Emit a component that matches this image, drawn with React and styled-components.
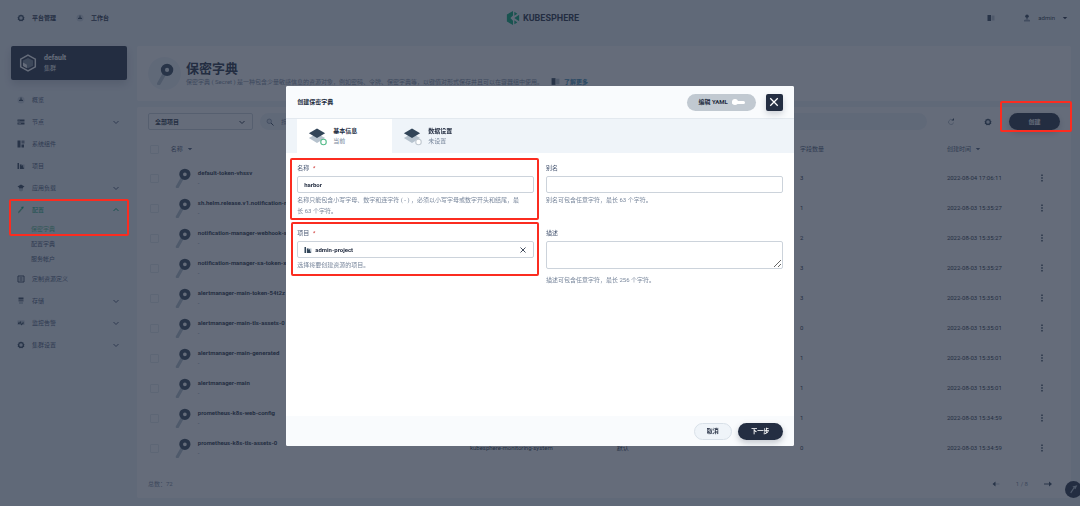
import React, { useState } from 'react';
import styled, { createGlobalStyle, css } from 'styled-components';

const GlobalStyle = createGlobalStyle`
    * {
        box-sizing: border-box;
    }
    body {
        margin: 0;
        overflow: hidden;
        background-color: #eff4f9;
        color: #242e42;
        font-family: Roboto, "Noto Sans CJK SC", sans-serif;
        font-size: 6px;
        line-height: 10px;
    }
    h1, h2, p, ul {
        margin: 0;
        padding: 0;
    }
    ul {
        list-style: none;
    }
    button, input, select, textarea {
        margin: 0;
        padding: 0;
        border: 0;
        background: none;
        color: inherit;
        font: inherit;
        outline: none;
    }
    button {
        cursor: pointer;
    }
    a {
        color: inherit;
        text-decoration: none;
    }
`;

// Icons

const Svg = ({ size = 8, children, ...rest }) => (
    <svg width={size} height={size} viewBox="0 0 16 16" fill="none" aria-hidden="true" {...rest}>{children}</svg>
);

const Gear = () => (
    <Svg>
        <path d="M8 1l2 1.6 2.6-.1.4 2.5L15 7l-1 2 .6 2.5-2.4 1L11 14.6 8 14l-3 .6-1.2-2.1-2.4-1L2 9 1 7l2-2 .4-2.5 2.6.1z" fill="#324558" />
        <circle cx="8" cy="8" r="3.500" fill="#d5dde6" />
    </Svg>
);
const Dashboard = () => (
    <Svg>
        <circle cx="8" cy="8" r="7" fill="#cdd6df" />
        <path d="M7 3h2v4l3 1v2H4V8l3-1z" fill="#324558" />
    </Svg>
);
const Nodes = () => (
    <Svg>
        <path d="M1 3h14v4H1zM1 9h14v4H1z" fill="#324558" />
        <path d="M3 4.5h2v1H3zM3 10.5h5v1H3z" fill="#fff" />
    </Svg>
);
const Components = () => (
    <Svg>
        <path d="M1 1h6v14H1zM9 9h5v6H9z" fill="#324558" />
        <path d="M9 1h6v6H9z" fill="#73808f" />
    </Svg>
);
const Project = () => (
    <Svg>
        <path d="M1 2h3v12H1z" fill="#324558" />
        <path d="M5 5h10v9H5z" fill="#b6c2cd" />
        <path d="M6 5h3v3l3-2v3l2 5H6z" fill="#324558" />
    </Svg>
);
const Workload = () => (
    <Svg>
        <path d="M8 1l7 4-3 2v2H4V7L1 5z" fill="#324558" />
        <path d="M4 10h8v3l-4 2-4-2z" fill="#b6c2cd" />
    </Svg>
);
const Hammer = () => (
    <Svg>
        <path d="M2 15l1-4 6-7 2 2-6 7z" fill="#55bc8a" />
        <path d="M8 2l5-1v3l-2 2z" fill="#00aa72" />
    </Svg>
);
const Resource = () => (
    <Svg>
        <path d="M2 2h12v12H2z" stroke="#324558" strokeWidth="2" />
        <path d="M5 5h6v2H5zM5 9h6v2H5z" fill="#324558" />
    </Svg>
);
const Storage = () => (
    <Svg>
        <path d="M3 1h10v4H3z" fill="#324558" />
        <path d="M3 6h10v3H3z" fill="#73808f" />
        <path d="M4 10h8v4H4z" fill="#b6c2cd" />
    </Svg>
);
const Monitor = () => (
    <Svg>
        <path d="M1 3h14v9H1z" fill="#b6c2cd" />
        <path d="M2 7h3l2-3 2 6 2-3h3v2h-2l-3 4-3-5-1 2H2z" fill="#324558" />
    </Svg>
);
const Book = ({ size }) => (
    <Svg size={size}>
        <path d="M1 2h7v12H1z" fill="#324558" />
        <path d="M9 3h6v10H9z" fill="#b6c2cd" />
    </Svg>
);
const User = () => (
    <Svg>
        <circle cx="8" cy="4.500" r="3.500" fill="#324558" />
        <path d="M7 8h2v3H7z" fill="#324558" />
        <path d="M2 15v-3l4-1h4l4 1v3z" fill="#8a98a7" />
    </Svg>
);
const Chevron = ({ up }) => (
    <Svg>
        <path d={up ? 'M3 10l5-5 5 5' : 'M3 6l5 5 5-5'} stroke="currentColor" strokeWidth="2" />
    </Svg>
);
const Caret = () => (
    <Svg size={6}>
        <path d="M2 5h12l-6 6z" fill="currentColor" />
    </Svg>
);
const Close = ({ size }) => (
    <Svg size={size}>
        <path d="M3 3l10 10M13 3L3 13" stroke="currentColor" strokeWidth="1.700" />
    </Svg>
);
const Arrow = ({ back }) => (
    <Svg>
        {back ? (
            <>
                <path d="M6 7h9v2H6z" fill="#b6c2cd" />
                <path d="M1 8l6-5v10z" fill="#324558" />
            </>
        ) : (
            <>
                <path d="M0 7h11v2H0z" fill="#324558" />
                <path d="M16 8l-6-5v10z" fill="#324558" />
            </>
        )}
    </Svg>
);
const Refresh = () => (
    <Svg>
        <path d="M11 4A5 5 0 1 0 13 9" stroke="#98a5b3" strokeWidth="1.500" />
        <path d="M9 5h5V0z" fill="#324558" />
    </Svg>
);
const Magnifier = () => (
    <Svg>
        <circle cx="6.500" cy="6.500" r="4.500" fill="#d5dde6" stroke="#79879c" strokeWidth="1.500" />
        <path d="M10 10l5 5" stroke="#324558" strokeWidth="2" />
    </Svg>
);
const More = () => (
    <Svg>
        <path d="M6.500 1h3v3h-3zM6.500 6.500h3v3h-3zM6.500 12h3v3h-3z" fill="#324558" />
    </Svg>
);
const KeyIcon = ({ size }) => (
    <Svg size={size}>
        <path d="M7.500 8L3.500 15" stroke="#b6c2cd" strokeWidth="2.600" strokeLinecap="round" />
        <circle cx="9.500" cy="5" r="3" stroke="#324558" strokeWidth="3" />
    </Svg>
);
const Cube = () => (
    <Svg size={18}>
        <path d="M8 1l6.500 3.500v7L8 15l-6.500-3.500v-7z" stroke="#fff" strokeWidth="1.300" />
        <path d="M8 3.500l4.500 2.300v4.600L8 12.700 3.500 10.400V5.800z" fill="#b6c2cd" fillOpacity=".6" />
        <path d="M3.500 7.500L7 9.500v3.200l-3.500-2z" fill="#fff" />
    </Svg>
);
const Layers = ({ color }) => (
    <Svg size={20}>
        <path d="M8 6l6.500 3.500L8 13.500 1.500 9.500z" fill="#b6c2cd" />
        <path d="M8 2l6.500 3.700L8 9.500 1.500 5.700z" fill="#324558" />
        <circle cx="13.200" cy="12.800" r="2.200" fill="#fff" stroke={color} strokeWidth=".9" />
    </Svg>
);
const Logo = () => (
    <Svg size={14}>
        <path d="M8 0v5L5 8l3 3v5L1 12V4z" fill="#00aa72" />
        <path d="M9.500 .8L13 3 9.500 5.500zM15 4.300v7.400L9.500 8zM9.500 10.500L13 13l-3.500 2.200z" fill="#00aa72" />
    </Svg>
);

// Data

const navs = [
    { name: '概览', icon: Dashboard },
    { name: '节点', icon: Nodes, more: true },
    { name: '系统组件', icon: Components },
    { name: '项目', icon: Project },
    { name: '应用负载', icon: Workload, more: true },
    { name: '配置', icon: Hammer, more: true, open: true, items: ['保密字典', '配置字典', '服务帐户'] },
    { name: '定制资源定义', icon: Resource },
    { name: '存储', icon: Storage, more: true },
    { name: '监控告警', icon: Monitor, more: true },
    { name: '集群设置', icon: Gear, more: true },
];

const ns = 'kubesphere-monitoring-system';
const secrets = [
    ['default-token-vhssv', 3, '2022-08-04 17:06:11'],
    ['sh.helm.release.v1.notification-manager.v1', 1, '2022-08-03 15:35:27'],
    ['notification-manager-webhook-server-cert', 2, '2022-08-03 15:35:27'],
    ['notification-manager-sa-token-x7k2p', 3, '2022-08-03 15:35:27'],
    ['alertmanager-main-token-54t2z', 3, '2022-08-03 15:35:01'],
    ['alertmanager-main-tls-assets-0', 0, '2022-08-03 15:35:01'],
    ['alertmanager-main-generated', 1, '2022-08-03 15:35:01'],
    ['alertmanager-main', 1, '2022-08-03 15:35:01'],
    ['prometheus-k8s-web-config', 1, '2022-08-03 15:34:59'],
    ['prometheus-k8s-tls-assets-0', 0, '2022-08-03 15:34:59'],
];

const Sidebar = () => (
    <Side>
        <Cluster>
            <Cube />
            <div>
                <ClusterName>default</ClusterName>
                <div>集群</div>
            </div>
        </Cluster>
        <ul>
            {navs.map(({ name, icon: NavIcon, more, open, items }) => (
                <NavItem key={name}>
                    <NavLink href="#" $active={open}>
                        <NavIcon />
                        <span>{name}</span>
                        {more && <Chevron up={open} />}
                    </NavLink>
                    {items && (
                        <SubNav>
                            {items.map((item, i) => (
                                <li key={item}><SubLink href="#" $active={i === 0}>{item}</SubLink></li>
                            ))}
                        </SubNav>
                    )}
                    {open && <Highlight $inset="0 -2px 32px" />}
                </NavItem>
            ))}
        </ul>
    </Side>
);

const SecretTable = () => (
    <Table>
        <colgroup>
            <col style={{ width: '2.5%' }} />
            <col style={{ width: '32.8%' }} />
            <col style={{ width: '16.1%' }} />
            <col style={{ width: '20.1%' }} />
            <col style={{ width: '16.1%' }} />
            <col style={{ width: '9.3%' }} />
            <col />
        </colgroup>
        <thead>
            <tr>
                <th><Check aria-label="全选" /></th>
                <th><Sort>名称 <Caret /></Sort></th>
                <th>项目</th>
                <th>类型</th>
                <th>字段数量</th>
                <th><Sort>创建时间 <Caret /></Sort></th>
                <th />
            </tr>
        </thead>
        <tbody>
            {secrets.map(([name, count, time]) => (
                <tr key={name}>
                    <td><Check aria-label={name} /></td>
                    <td>
                        <NameCell>
                            <KeyIcon size={20} />
                            <div>
                                <Name href="#">{name}</Name>
                                <Sub>-</Sub>
                            </div>
                        </NameCell>
                    </td>
                    <td>{ns}</td>
                    <td>默认</td>
                    <td>{count}</td>
                    <td>{time}</td>
                    <td><button type="button" aria-label="更多操作"><More /></button></td>
                </tr>
            ))}
        </tbody>
    </Table>
);

const CreateModal = () => {
    const [form, setForm] = useState({ name: 'harbor', alias: '', desc: '' });
    const update = (e) => setForm({ ...form, [e.target.name]: e.target.value });

    return (
        <Mask>
            <Modal role="dialog" aria-labelledby="modal-title">
                <ModalHeader>
                    <ModalTitle id="modal-title">创建保密字典</ModalTitle>
                    <YamlButton type="button">编辑 YAML <Toggle /></YamlButton>
                    <CloseButton type="button" aria-label="关闭"><Close size={12} /></CloseButton>
                </ModalHeader>
                <Steps>
                    <Step type="button" $current>
                        <Layers color="#55bc8a" />
                        <span><b>基本信息</b><br />当前</span>
                    </Step>
                    <Step type="button">
                        <Layers color="#c1c9d1" />
                        <span><b>数据设置</b><br />未设置</span>
                    </Step>
                </Steps>
                <ModalBody>
                    <Field>
                        <Label htmlFor="name">名称 <i>*</i></Label>
                        <Input id="name" name="name" value={form.name} onChange={update} />
                        <Help>名称只能包含小写字母、数字和连字符 ( - ) ，必须以小写字母或数字开头和结尾，最长 63 个字符。</Help>
                        <Highlight $inset="-5px -5px -4px -7px" />
                    </Field>
                    <Field>
                        <Label htmlFor="alias">别名</Label>
                        <Input id="alias" name="alias" value={form.alias} onChange={update} />
                        <Help>别名可包含任意字符，最长 63 个字符。</Help>
                    </Field>
                    <Field>
                        <Label htmlFor="project">项目 <i>*</i></Label>
                        <ProjectBox>
                            <Project />
                            <select id="project"><option>admin-project</option></select>
                            <button type="button" aria-label="清除"><Close size={8} /></button>
                        </ProjectBox>
                        <Help>选择将要创建资源的项目。</Help>
                        <Highlight $inset="-6px -5px -6px -6px" />
                    </Field>
                    <Field>
                        <Label htmlFor="desc">描述</Label>
                        <TextArea id="desc" name="desc" value={form.desc} onChange={update} />
                        <Help>描述可包含任意字符，最长 256 个字符。</Help>
                    </Field>
                </ModalBody>
                <ModalFooter>
                    <CancelButton type="button">取消</CancelButton>
                    <NextButton type="button">下一步</NextButton>
                </ModalFooter>
            </Modal>
        </Mask>
    );
};

const App = () => (
    <>
        <GlobalStyle />
        <Header>
            <HeaderLinks>
                <HeaderLink href="#"><Gear />平台管理</HeaderLink>
                <HeaderLink href="#"><Dashboard />工作台</HeaderLink>
            </HeaderLinks>
            <Brand href="#"><Logo />KUBESPHERE</Brand>
            <HeaderTools>
                <button type="button" aria-label="文档"><Book /></button>
                <UserButton type="button"><User />admin<Caret /></UserButton>
            </HeaderTools>
        </Header>
        <Layout>
            <Sidebar />
            <Main>
                <Banner>
                    <BannerIcon><KeyIcon size={22} /></BannerIcon>
                    <div>
                        <BannerTitle>保密字典</BannerTitle>
                        <BannerText>
                            保密字典 ( Secret ) 是一种包含少量敏感信息的资源对象，例如密码、令牌、保密字典等，以键值对形式保存并且可以在容器组中使用。
                            <MoreLink href="#"><Book size={9} />了解更多</MoreLink>
                        </BannerText>
                    </div>
                </Banner>
                <Card>
                    <Toolbar>
                        <SelectBox>
                            <select aria-label="项目"><option>全部项目</option></select>
                            <Chevron />
                        </SelectBox>
                        <Search>
                            <Magnifier />
                            <input type="text" placeholder="按名称搜索" aria-label="按名称搜索" />
                        </Search>
                        <ToolButton type="button" aria-label="刷新"><Refresh /></ToolButton>
                        <ToolButton type="button" aria-label="设置"><Gear /></ToolButton>
                        <CreateWrap>
                            <CreateButton type="button">创建</CreateButton>
                            <Highlight $inset="-12px -12px -2px -9px" />
                        </CreateWrap>
                    </Toolbar>
                    <SecretTable />
                    <Pagination>
                        <span>总数：72</span>
                        <Pager>
                            <button type="button" aria-label="上一页"><Arrow back /></button>
                            <span>1 / 8</span>
                            <button type="button" aria-label="下一页"><Arrow /></button>
                        </Pager>
                    </Pagination>
                </Card>
            </Main>
        </Layout>
        <Toolbox type="button" aria-label="工具箱">
            <Svg size={9}><path d="M3 14l6-9M8 3l5-1-2 4z" stroke="#b6c2cd" strokeWidth="2" /></Svg>
        </Toolbox>
        <CreateModal />
    </>
);
export default App;

// Shared

const Highlight = styled.div`
    position: absolute;
    inset: ${({ $inset }) => $inset};
    z-index: 20;
    border: 2px solid #fb2c20;
    border-radius: 2px;
    pointer-events: none;
`;

const pill = css`
    height: 17px;
    border-radius: 9px;
    font-weight: bold;
`;

const darkPill = css`
    ${pill}
    background-color: #242e42;
    color: #fff;
    box-shadow: 0 3px 6px rgba(36, 46, 66, 0.25);
`;

const control = css`
    display: block;
    width: 100%;
    border: 1px solid #ccd3db;
    border-radius: 2px;
    background-color: #fff;
    font-weight: bold;
`;

// Header

const Header = styled.header`
    display: grid;
    grid-template-columns: 1fr auto 1fr;
    align-items: center;
    height: 36px;
    padding: 0 12px 0 17px;
`;

const HeaderLinks = styled.nav`
    display: flex;
    gap: 20px;
`;

const HeaderLink = styled.a`
    display: flex;
    align-items: center;
    gap: 7px;
    font-weight: bold;
`;

const Brand = styled.a`
    display: flex;
    align-items: center;
    gap: 3px;
    font-size: 9px;
    font-weight: bold;
`;

const HeaderTools = styled.div`
    display: flex;
    align-items: center;
    justify-content: flex-end;
    gap: 28px;

    button {
        display: flex;
    }
`;

const UserButton = styled.button`
    align-items: center;
    gap: 7px;
`;

// Layout

const Layout = styled.div`
    display: flex;
    padding: 10px 9px 8px 11px;
`;

const Side = styled.aside`
    flex: 0 0 126px;
    padding-right: 10px;
`;

const Cluster = styled.div`
    display: flex;
    align-items: center;
    gap: 7px;
    height: 34px;
    margin-bottom: 9px;
    padding: 0 8px;
    border-radius: 2px;
    background-color: #242e42;
    color: #fff;
    box-shadow: 0 4px 8px rgba(36, 46, 66, 0.2);
`;

const ClusterName = styled.div`
    font-size: 7px;
    font-weight: bold;
`;

const NavItem = styled.li`
    position: relative;
`;

const NavLink = styled.a`
    display: flex;
    align-items: center;
    gap: 7px;
    height: 22px;
    padding: 0 7px 0 6px;
    color: ${({ $active }) => ($active ? '#00aa72' : '#4a5974')};

    span {
        flex: 1;
    }
`;

const SubNav = styled.ul`
    padding: 0 0 2px 20px;
`;

const SubLink = styled.a`
    display: block;
    height: 15px;
    line-height: 15px;
    color: ${({ $active }) => ($active ? '#55bc8a' : '#4a5974')};
`;

const Main = styled.main`
    flex: 1;
    min-width: 0;
`;

const Card = styled.section`
    padding: 6px 11px 0;
    border-radius: 2px;
    background-color: #fff;
`;

const Banner = styled(Card)`
    display: flex;
    align-items: center;
    gap: 5px;
    height: 55px;
    margin-bottom: 6px;
    padding: 0 11px;
`;

const BannerIcon = styled.div`
    display: flex;
    align-items: center;
    justify-content: center;
    width: 33px;
    height: 33px;
    border-radius: 50%;
    background-color: #eff4f9;
`;

const BannerTitle = styled.h1`
    font-size: 13px;
    line-height: 16px;
`;

const BannerText = styled.p`
    display: flex;
    gap: 8px;
    color: #79879c;
`;

const MoreLink = styled.a`
    display: flex;
    align-items: center;
    gap: 4px;
    color: #3385b0;
    font-weight: bold;
`;

// Toolbar

const Toolbar = styled.div`
    display: flex;
    align-items: center;
    margin-bottom: 5px;
`;

const SelectBox = styled.div`
    ${control}
    display: flex;
    align-items: center;
    width: 105px;
    height: 17px;
    padding: 0 6px;

    select {
        flex: 1;
        appearance: none;
    }
`;

const Search = styled.div`
    display: flex;
    flex: 1;
    align-items: center;
    gap: 7px;
    height: 17px;
    margin: 0 20px 0 7px;
    padding: 0 6px;
    border-radius: 9px;
    background-color: #eff4f9;

    input {
        flex: 1;
    }
    input::placeholder {
        color: #79879c;
    }
`;

const ToolButton = styled.button`
    display: flex;
    width: 8px;
    margin-right: 29px;

    & + & {
        margin-right: 17px;
    }
`;

const CreateWrap = styled.div`
    position: relative;
`;

const CreateButton = styled.button`
    ${darkPill}
    display: block;
    width: 51px;
`;

// Table

const Table = styled.table`
    width: 100%;
    border-collapse: collapse;
    table-layout: fixed;

    th, td {
        height: 30px;
        padding: 0;
        text-align: left;
        white-space: nowrap;
    }
    th {
        height: 28px;
        color: #4a5974;
        font-weight: normal;
    }
    td > button {
        display: flex;
        margin-left: 6px;
    }
`;

const Check = styled.input.attrs({ type: 'checkbox' })`
    display: block;
    width: 9px;
    height: 9px;
    margin-left: 2px;
    border: 1px solid #e3e9ef;
    border-radius: 1px;
    appearance: none;
`;

const Sort = styled.button`
    display: flex;
    align-items: center;
    gap: 4px;
`;

const NameCell = styled.div`
    display: flex;
    align-items: center;
    gap: 5px;
    padding-left: 2px;
`;

const Name = styled.a`
    display: block;
    font-weight: bold;
`;

const Sub = styled.div`
    color: #79879c;
`;

const Pagination = styled.div`
    display: flex;
    align-items: center;
    justify-content: space-between;
    height: 35px;
    padding: 7px 8px 0 0;
    color: #79879c;
`;

const Pager = styled.div`
    display: flex;
    align-items: center;
    gap: 16px;

    button {
        display: flex;
    }
`;

const Toolbox = styled.button`
    position: fixed;
    right: -2px;
    bottom: 8px;
    display: flex;
    align-items: center;
    justify-content: center;
    width: 17px;
    height: 17px;
    border-radius: 50%;
    background-color: #242e42;
`;

// Modal

const Mask = styled.div`
    position: fixed;
    inset: 0;
    z-index: 10;
    display: flex;
    align-items: flex-start;
    justify-content: center;
    padding-top: 86px;
    background-color: rgba(36, 46, 66, 0.7);
`;

const Modal = styled.div`
    width: 47%;
    border-radius: 2px;
    background-color: #fff;
`;

const ModalHeader = styled.div`
    display: flex;
    align-items: center;
    gap: 10px;
    height: 33px;
    padding: 0 11px;
    border-bottom: 1px solid #e3e9ef;
    border-radius: 2px 2px 0 0;
    background-color: #f9fbfd;
`;

const ModalTitle = styled.h2`
    flex: 1;
    font-size: 6px;
`;

const YamlButton = styled.button`
    ${pill}
    display: flex;
    align-items: center;
    gap: 4px;
    padding: 0 11px;
    background-color: #c1c9d1;
`;

const Toggle = styled.span`
    display: flex;
    align-items: center;
    width: 13px;
    height: 3px;
    border-radius: 2px;
    background-color: #fff;

    &::before {
        width: 6px;
        height: 6px;
        border-radius: 50%;
        background-color: #fff;
        content: "";
    }
`;

const CloseButton = styled.button`
    display: flex;
    align-items: center;
    justify-content: center;
    width: 17px;
    height: 17px;
    border-radius: 2px;
    background-color: #242e42;
    color: #fff;
    box-shadow: 0 3px 6px rgba(36, 46, 66, 0.2);
`;

const Steps = styled.div`
    display: flex;
    height: 34px;
    padding: 0 11px;
    background-color: #eff4f9;
`;

const Step = styled.button`
    display: flex;
    align-items: center;
    gap: 6px;
    width: 95px;
    padding: 0 10px;
    background-color: ${({ $current }) => ($current ? '#fff' : 'transparent')};
    color: #79879c;
    text-align: left;

    b {
        color: #242e42;
    }
`;

const ModalBody = styled.div`
    display: grid;
    grid-template-columns: 1fr 1fr;
    align-content: start;
    align-items: start;
    gap: 12px;
    min-height: 52vh;
    padding: 10px 11px;
`;

const Field = styled.div`
    position: relative;
`;

const Label = styled.label`
    display: block;
    margin-bottom: 3px;
    color: #4a5974;

    i {
        margin-left: 2px;
        color: #ca2621;
    }
`;

const Input = styled.input`
    ${control}
    height: 17px;
    padding: 0 6px;
`;

const TextArea = styled.textarea`
    ${control}
    height: 28px;
    padding: 3px 6px;
    margin-bottom: 5px;
    resize: vertical;
`;

const ProjectBox = styled.div`
    ${control}
    display: flex;
    align-items: center;
    gap: 3px;
    height: 17px;
    padding: 0 6px;

    select {
        flex: 1;
        appearance: none;
    }
    button {
        display: flex;
    }
`;

const Help = styled.p`
    margin-top: 1px;
    padding-right: 12px;
    color: #79879c;
    line-height: 11px;
`;

const ModalFooter = styled.div`
    display: flex;
    align-items: center;
    justify-content: flex-end;
    gap: 6px;
    height: 30px;
    padding: 0 11px;
    border-radius: 0 0 2px 2px;
    background-color: #f9fbfd;
`;

const CancelButton = styled.button`
    ${pill}
    width: 38px;
    border: 1px solid #d8e0e8;
    background-color: #eff4f9;
`;

const NextButton = styled.button`
    ${darkPill}
    width: 45px;
`;
